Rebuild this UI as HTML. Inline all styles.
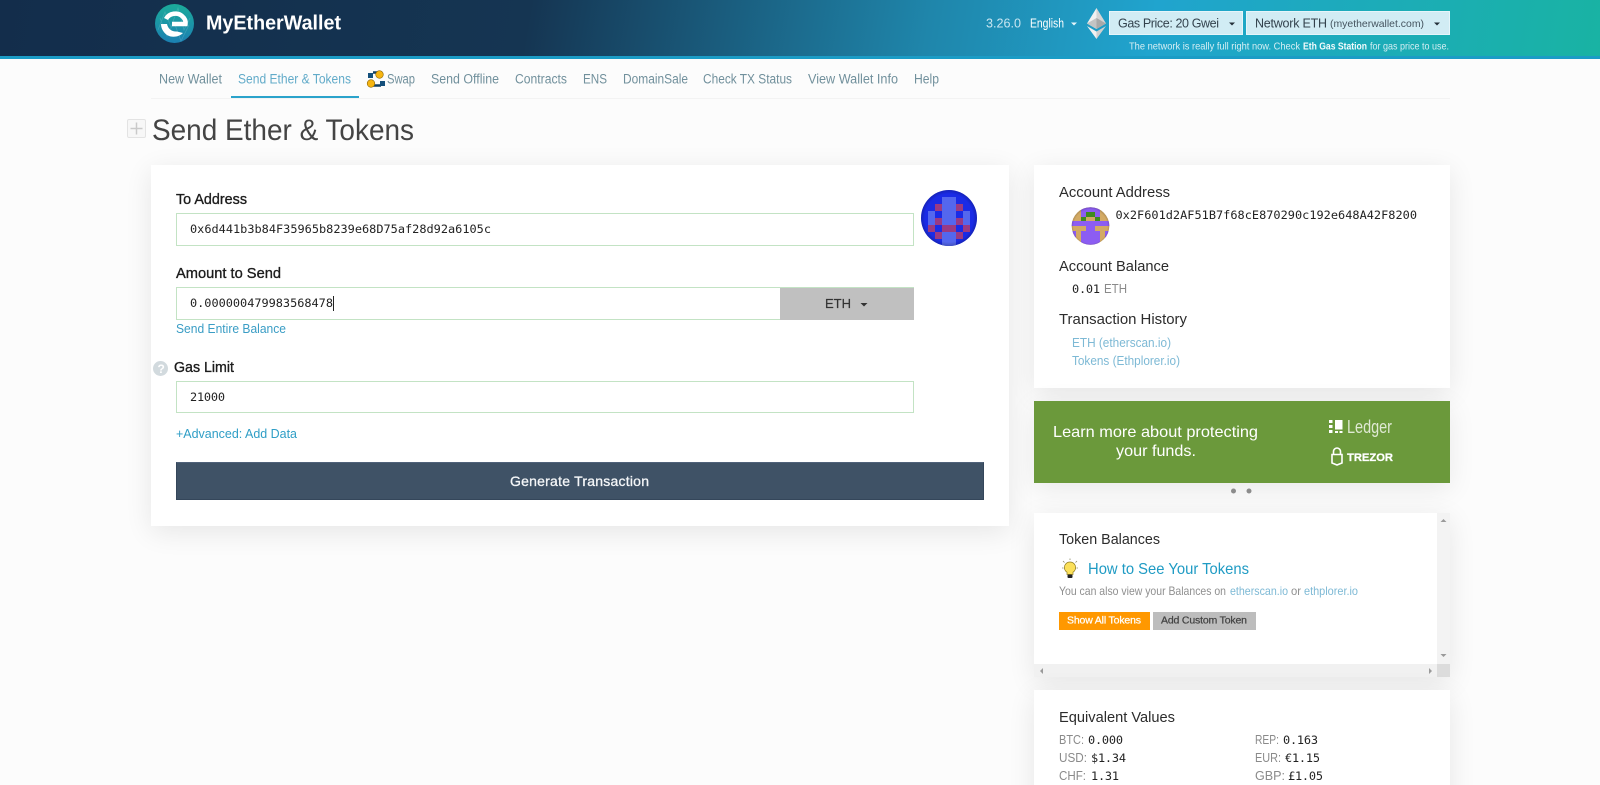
<!DOCTYPE html>
<html lang="en"><head><meta charset="utf-8"><title>MyEtherWallet</title>
<style>
html,body{margin:0;padding:0;width:1600px;height:785px;overflow:hidden;background:#fcfcfc}
#p{position:relative;width:1600px;height:785px;overflow:hidden}
.b{position:absolute;box-sizing:border-box}
.hd{left:0;top:0;width:1600px;height:59px;background:linear-gradient(100deg,#132d4b 0%,#153552 33%,#1f86ab 58%,#20a4ce 72%,#1cacb8 86%,#19b3a3 100%);border-bottom:3px solid #1b9cc6}
.card{background:#fff;box-shadow:0 6px 26px rgba(0,0,0,.09)}
.inp{background:#fff;border:1.5px solid #c3e3c4}
svg{position:absolute;left:0;top:0}
text{font-family:"Liberation Sans",sans-serif}
.m{font-family:"DejaVu Sans Mono","Liberation Mono",monospace;font-size:11.9px;fill:#222}
.n{font-size:13.5px;fill:#71909c}
.h{font-size:15px;fill:#2c2c2c}
.l{font-size:15px;fill:#1c1c1c;stroke:#1c1c1c;stroke-width:.35px}
.a{font-size:13px;fill:#7db9d5}
.g{font-size:13px;fill:#8a8a8a}
.e{font-size:12px;fill:#8f8f8f}
</style></head><body><div id="p">
<div class="b hd"></div>
<div class="b" style="left:151px;top:98px;width:1299px;height:1px;background:#f3f3f3"></div>
<div class="b" style="left:231px;top:96px;width:128px;height:2px;background:#2ba3cb"></div>
<div class="b" style="left:127px;top:119px;width:19px;height:19px;border:1px solid #e3e3e3;border-radius:2px;background:#f7f7f7"></div>
<div class="b card" style="left:151px;top:165px;width:858px;height:361px"></div>
<div class="b inp" style="left:176px;top:213px;width:738px;height:32.5px"></div>
<div class="b inp" style="left:176px;top:287px;width:738px;height:33px;border-right:0"></div>
<div class="b" style="left:780px;top:288px;width:134px;height:32px;background:#c0c0c0"></div>
<div class="b inp" style="left:176px;top:381px;width:738px;height:32px"></div>
<div class="b" style="left:176px;top:462px;width:808px;height:38px;background:#3f5266;border:1px solid #34465a;border-top-color:#50627a"></div>
<div class="b card" style="left:1034px;top:165px;width:416px;height:223px"></div>
<div class="b" style="left:1034px;top:401px;width:416px;height:82px;background:#6b993b;box-shadow:0 6px 26px rgba(0,0,0,.08)"></div>
<div class="b card" style="left:1034px;top:513px;width:416px;height:164px"></div>
<div class="b" style="left:1437px;top:513px;width:13px;height:151px;background:#f3f3f3"></div>
<div class="b" style="left:1034px;top:664px;width:403px;height:13px;background:#f1f1f1"></div>
<div class="b" style="left:1437px;top:664px;width:13px;height:13px;background:#dcdcdc"></div>
<div class="b" style="left:1059px;top:612px;width:91px;height:18px;background:#ff9800"></div>
<div class="b" style="left:1153px;top:612px;width:103px;height:18px;background:#bdbdbd"></div>
<div class="b card" style="left:1034px;top:690px;width:416px;height:120px"></div>

<svg width="1600" height="785" viewBox="0 0 1600 785" xmlns="http://www.w3.org/2000/svg">
<defs>
<linearGradient id="lg" x1="0" y1="0" x2="0" y2="1"><stop offset="0" stop-color="#1bab9a"/><stop offset="1" stop-color="#1b80b2"/></linearGradient>
<clipPath id="c1"><circle cx="949" cy="218" r="28"/></clipPath>
<clipPath id="c2"><circle cx="1090.500" cy="226" r="18.800"/></clipPath>
<radialGradient id="sh"><stop offset=".86" stop-color="#000" stop-opacity="0"/><stop offset="1" stop-color="#000" stop-opacity=".2"/></radialGradient>
</defs>

<!-- logo -->
<circle cx="174.500" cy="23.500" r="19.500" fill="url(#lg)"/>
<path d="M158 30L165 12 171 27 178 8 184 30 190 18M160 18l7 18 7-14 7 19 8-16" fill="none" stroke="#fff" stroke-opacity=".14" stroke-width=".8"/>
<path d="M166 19C169 13 178 12 182 16C185 18.500 186 21 185.500 24L172 24" fill="none" stroke="#fff" stroke-width="4.500"/>
<path d="M161 24L167 24C168 29 172 32 177 31.500L183 33C179 37 172 38 167 35C163 32 161 28 161 24z" fill="#fff"/>
<text x="206" y="29.500" textLength="135" lengthAdjust="spacingAndGlyphs" font-size="20" font-weight="700" fill="#fff">MyEtherWallet</text>

<!-- header right -->
<text x="986" y="27.500" textLength="35" lengthAdjust="spacingAndGlyphs" font-size="13" fill="#c9e6f1">3.26.0</text>
<text x="1030" y="27.500" textLength="34" lengthAdjust="spacingAndGlyphs" font-size="12.500" fill="#fff">English</text>
<path d="M1071 22.500h6l-3 3z" fill="#e6f5fa"/>
<path d="M1096.500 8l-9.500 15.500 9.500 5.500z" fill="#f1f1f1"/>
<path d="M1096.500 8l9.500 15.500-9.500 5.500z" fill="#d4d4d4"/>
<path d="M1096.500 18l-9.500 5.500 9.500 5.500z" fill="#c4c4c4"/>
<path d="M1096.500 18l9.500 5.500-9.500 5.500z" fill="#a9a9a9"/>
<path d="M1087 26l9.500 13 0-7.500z" fill="#f1f1f1"/>
<path d="M1106 26l-9.500 13 0-7.500z" fill="#cfcfcf"/>
<rect x="1109.500" y="11.500" width="133" height="23" fill="#d1ecf4" stroke="#e6f5fa"/>
<rect x="1246.500" y="11.500" width="203" height="23" fill="#d1ecf4" stroke="#e6f5fa"/>
<text x="1118" y="27.500" textLength="101" lengthAdjust="spacing" font-size="12.500" fill="#33424d">Gas Price: 20 Gwei</text>
<path d="M1229 22.500h6l-3 3z" fill="#24303a"/>
<text x="1255" y="27.500" textLength="72" lengthAdjust="spacing" font-size="12.500" fill="#33424d">Network ETH</text>
<text x="1330" y="27" textLength="94" lengthAdjust="spacingAndGlyphs" font-size="10.500" fill="#45545f">(myetherwallet.com)</text>
<path d="M1434 22.500h6l-3 3z" fill="#24303a"/>
<text x="1129" y="49.500" textLength="171" lengthAdjust="spacingAndGlyphs" font-size="10.500" fill="#d5eef3">The network is really full right now. Check</text>
<text x="1303" y="49.500" textLength="64" lengthAdjust="spacingAndGlyphs" font-size="10.500" font-weight="700" fill="#f2fbfc">Eth Gas Station</text>
<text x="1370" y="49.500" textLength="79" lengthAdjust="spacingAndGlyphs" font-size="10.500" fill="#d5eef3">for gas price to use.</text>

<!-- nav -->
<text class="n" x="159" y="83.500" textLength="63" lengthAdjust="spacingAndGlyphs">New Wallet</text>
<text class="n" x="238" y="83.500" textLength="113" lengthAdjust="spacingAndGlyphs" style="fill:#62abc9">Send Ether &amp; Tokens</text>
<path d="M373 72.500h8M373 85.500h8" stroke="#123f63" stroke-width="2.500" fill="none"/>
<path d="M368 73h5v5h-5zM380 81h5v5h-5z" fill="#14507c"/>
<circle cx="379.500" cy="74.500" r="3.800" fill="#f6b511" stroke="#8a6200" stroke-width=".6"/>
<circle cx="371" cy="83.500" r="3.800" fill="#f6b511" stroke="#8a6200" stroke-width=".6"/>
<text class="n" x="387" y="83.500" textLength="28" lengthAdjust="spacingAndGlyphs">Swap</text>
<text class="n" x="431" y="83.500" textLength="68" lengthAdjust="spacingAndGlyphs">Send Offline</text>
<text class="n" x="515" y="83.500" textLength="52" lengthAdjust="spacingAndGlyphs">Contracts</text>
<text class="n" x="583" y="83.500" textLength="24" lengthAdjust="spacingAndGlyphs">ENS</text>
<text class="n" x="623" y="83.500" textLength="65" lengthAdjust="spacingAndGlyphs">DomainSale</text>
<text class="n" x="703" y="83.500" textLength="89" lengthAdjust="spacingAndGlyphs">Check TX Status</text>
<text class="n" x="808" y="83.500" textLength="90" lengthAdjust="spacingAndGlyphs">View Wallet Info</text>
<text class="n" x="914" y="83.500" textLength="25" lengthAdjust="spacingAndGlyphs">Help</text>

<!-- title -->
<path d="M130.500 128.500h12M136.500 122.500v12" stroke="#c9c9c9" stroke-width="1.500"/>
<text x="152" y="140" textLength="262" lengthAdjust="spacingAndGlyphs" font-size="30" fill="#444">Send Ether &amp; Tokens</text>

<!-- form -->
<text class="l" x="176" y="204" textLength="71" lengthAdjust="spacingAndGlyphs">To Address</text>
<text class="m" x="190" y="233" textLength="301" lengthAdjust="spacing">0x6d441b3b84F35965b8239e68D75af28d92a6105c</text>
<text class="l" x="176" y="278" textLength="105" lengthAdjust="spacingAndGlyphs">Amount to Send</text>
<text class="m" x="190" y="307" textLength="143" lengthAdjust="spacing">0.000000479983568478</text>
<rect x="333" y="296" width="1" height="15" fill="#222"/>
<text x="825" y="308" textLength="26" lengthAdjust="spacing" font-size="13" fill="#333" stroke="#333" stroke-width=".2">ETH</text>
<path d="M860.500 303h7l-3.500 3.500z" fill="#333"/>
<text x="176" y="333" textLength="110" lengthAdjust="spacingAndGlyphs" font-size="13" fill="#3a9dc5">Send Entire Balance</text>
<circle cx="160.500" cy="368.500" r="7.500" fill="#d2dade"/>
<text x="157.500" y="373" font-size="12" font-weight="700" fill="#fff">?</text>
<text class="l" x="174" y="372" textLength="60" lengthAdjust="spacingAndGlyphs">Gas Limit</text>
<text class="m" x="190" y="401" textLength="35" lengthAdjust="spacing">21000</text>
<text x="176" y="438" textLength="121" lengthAdjust="spacingAndGlyphs" font-size="13" fill="#2f9ec6">+Advanced: Add Data</text>
<text x="510" y="486" textLength="139" lengthAdjust="spacing" font-size="14" fill="#f4f6f8" stroke="#f4f6f8" stroke-width=".3">Generate Transaction</text>

<!-- to identicon -->
<g clip-path="url(#c1)">
<rect x="921" y="190" width="56" height="56" fill="#1a2be6"/>
<path d="M942 197h14v49h-14zM928 211h7v14h-7zM963 211h7v14h-7z" fill="#5467ee"/>
<path d="M935 204h7v7h-7zM956 204h7v7h-7zM935 218h7v7h-7zM956 218h7v7h-7zM928 225h7v7h-7zM942 225h14v7h-14zM963 225h7v7h-7zM935 232h7v7h-7zM956 232h7v7h-7z" fill="#9a3a84"/>
<rect x="921" y="190" width="56" height="56" fill="url(#sh)"/>
</g>

<!-- account identicon -->
<g clip-path="url(#c2)">
<rect x="1071" y="207" width="39" height="39" fill="#d3aa64"/>
<path d="M1081 207h19v5h-19zM1081 212h5v5h-5zM1095 212h5v5h-5zM1071 221h39v5h-39zM1086 226h9v20h-9zM1071 231h5v5h-5zM1081 231h19v5h-19zM1105 231h5v5h-5zM1071 236h5v10h-5zM1081 236h19v5h-19zM1105 236h5v10h-5zM1081 241h5v5h-5zM1095 241h5v5h-5z" fill="#8c5df2"/>
<path d="M1086 212h9v5h-9zM1081 217h5v4h-5zM1095 217h5v4h-5z" fill="#3f8b1f"/>
<rect x="1071" y="207" width="39" height="39" fill="url(#sh)"/>
</g>

<!-- account card -->
<text class="h" x="1059" y="197" textLength="111" lengthAdjust="spacingAndGlyphs">Account Address</text>
<text class="m" x="1115.500" y="219" textLength="301.500" lengthAdjust="spacing">0x2F601d2AF51B7f68cE870290c192e648A42F8200</text>
<text class="h" x="1059" y="271" textLength="110" lengthAdjust="spacingAndGlyphs">Account Balance</text>
<text class="m" x="1072" y="293" textLength="28" lengthAdjust="spacing">0.01</text>
<text class="g" x="1104" y="293" textLength="23" lengthAdjust="spacingAndGlyphs">ETH</text>
<text class="h" x="1059" y="324" textLength="128" lengthAdjust="spacingAndGlyphs">Transaction History</text>
<text class="a" x="1072" y="347" textLength="99" lengthAdjust="spacingAndGlyphs">ETH (etherscan.io)</text>
<text class="a" x="1072" y="365" textLength="108" lengthAdjust="spacingAndGlyphs">Tokens (Ethplorer.io)</text>

<!-- banner -->
<text x="1053" y="437" textLength="205" lengthAdjust="spacingAndGlyphs" font-size="16" fill="#fff">Learn more about protecting</text>
<text x="1116" y="456" textLength="80" lengthAdjust="spacingAndGlyphs" font-size="16" fill="#fff">your funds.</text>
<path d="M1335 420h7.500v9.500h-7.500zM1329 420h3.500v3h-3.500zM1329 425h3.500v3h-3.500zM1329 430h3.500v3h-3.500zM1335 431h3v2h-3zM1339.500 431h3v2h-3z" fill="#fff"/>
<text x="1347" y="433" textLength="45" lengthAdjust="spacingAndGlyphs" font-size="18" fill="#dfe9d3">Ledger</text>
<path d="M1333.500 454v-2.500a3.500 3.500 0 0 1 7 0v2.500" fill="none" stroke="#fff" stroke-width="1.600"/>
<path d="M1332 454.500h10v8.500l-5 2-5-2z" fill="none" stroke="#fff" stroke-width="1.600"/>
<text x="1347" y="461" textLength="46" lengthAdjust="spacingAndGlyphs" font-size="11" font-weight="700" fill="#fff" stroke="#fff" stroke-width=".3">TREZOR</text>
<circle cx="1233.500" cy="491" r="2.500" fill="#8c8c8c"/>
<circle cx="1249" cy="491" r="2.500" fill="#8c8c8c"/>

<!-- token card -->
<text class="h" x="1059" y="544" textLength="101" lengthAdjust="spacingAndGlyphs">Token Balances</text>
<path d="M1070 562a5.500 5.500 0 0 0-3 10.200v2.300h6v-2.300a5.500 5.500 0 0 0-3-10.200z" fill="#fbe05a" stroke="#8d7a20" stroke-width=".7"/>
<rect x="1067.500" y="574.500" width="5" height="3.500" rx="1" fill="#222"/>
<path d="M1063 561l1.500 1.500M1077 561l-1.500 1.500M1070 558.500v1.500M1062 568h1.500M1078 568h-1.500" stroke="#8b8b6a" stroke-width=".8"/>
<text x="1088" y="574" textLength="161" lengthAdjust="spacingAndGlyphs" font-size="16" fill="#1f9bc4">How to See Your Tokens</text>
<text class="e" x="1059" y="595" textLength="167" lengthAdjust="spacingAndGlyphs">You can also view your Balances on</text>
<text class="e" x="1230" y="595" textLength="58" lengthAdjust="spacingAndGlyphs" style="fill:#7db9d5">etherscan.io</text>
<text class="e" x="1291" y="595" textLength="10" lengthAdjust="spacingAndGlyphs">or</text>
<text class="e" x="1304" y="595" textLength="54" lengthAdjust="spacingAndGlyphs" style="fill:#7db9d5">ethplorer.io</text>
<text x="1067" y="623.500" textLength="74" lengthAdjust="spacing" font-size="10.500" fill="#fff" stroke="#fff" stroke-width=".25">Show All Tokens</text>
<text x="1161" y="623.500" textLength="86" lengthAdjust="spacing" font-size="10.500" fill="#444" stroke="#444" stroke-width=".25">Add Custom Token</text>
<path d="M1440.500 522h6l-3-3zM1440.500 654h6l-3 3zM1043 668l-3 3 3 3zM1429 668l3 3-3 3z" fill="#9a9a9a"/>

<!-- equivalent -->
<text class="h" x="1059" y="722" textLength="116" lengthAdjust="spacingAndGlyphs">Equivalent Values</text>
<text class="g" x="1059" y="744" textLength="25" lengthAdjust="spacingAndGlyphs">BTC:</text><text class="m" x="1088" y="744" textLength="35" lengthAdjust="spacing">0.000</text>
<text class="g" x="1255" y="744" textLength="24" lengthAdjust="spacingAndGlyphs">REP:</text><text class="m" x="1283" y="744" textLength="35" lengthAdjust="spacing">0.163</text>
<text class="g" x="1059" y="762" textLength="28" lengthAdjust="spacingAndGlyphs">USD:</text><text class="m" x="1091" y="762" textLength="35" lengthAdjust="spacing">$1.34</text>
<text class="g" x="1255" y="762" textLength="26" lengthAdjust="spacingAndGlyphs">EUR:</text><text class="m" x="1285" y="762" textLength="35" lengthAdjust="spacing">€1.15</text>
<text class="g" x="1059" y="780" textLength="27" lengthAdjust="spacingAndGlyphs">CHF:</text><text class="m" x="1091" y="780" textLength="28" lengthAdjust="spacing">1.31</text>
<text class="g" x="1255" y="780" textLength="30" lengthAdjust="spacingAndGlyphs">GBP:</text><text class="m" x="1288" y="780" textLength="35" lengthAdjust="spacing">£1.05</text>
</svg>
</div></body></html>
